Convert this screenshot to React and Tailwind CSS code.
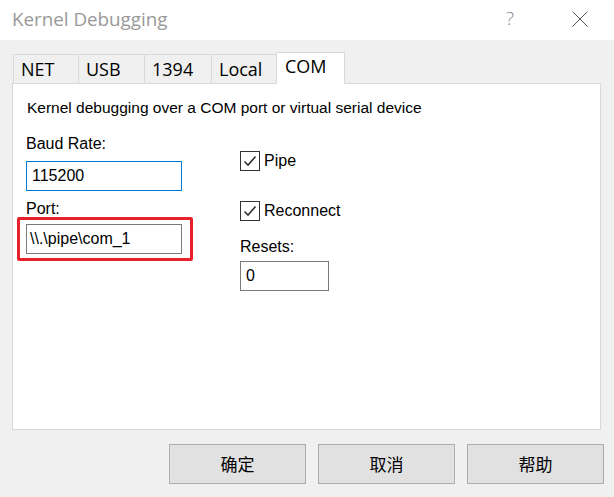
const seg = { fontFamily: '"Open Sans", "Noto Sans", sans-serif' };
const arial = { fontFamily: '"Liberation Sans", Arial, sans-serif' };
const cjk = { fontFamily: '"Noto Sans CJK SC", "Noto Sans", sans-serif' };

function Check({ label, className = "" }) {
  return (
    <label className={"flex items-center gap-[4px] " + className}>
      <span className="w-[20px] h-[20px] border border-[#333333] bg-white flex items-center justify-center">
        <svg width="14" height="12" viewBox="0 0 14 12">
          <path d="M1.5 6.5 L5 10 L12.5 1.5" fill="none" stroke="#333" strokeWidth="1.6" />
        </svg>
      </span>
      <span className="text-[16px] leading-[18px] text-black">{label}</span>
    </label>
  );
}

function Tab({ label, active }) {
  if (active) {
    return (
      <div className="relative z-10 -ml-px -mb-px w-[69px] h-[32px] bg-white border border-b-0 border-[#d9d9d9] pl-[8px] text-[18px] leading-[26px] text-black">
        {label}
      </div>
    );
  }
  return (
    <div className="-ml-px first:ml-0 h-[29px] bg-[#f0f0f0] border border-b-0 border-[#d9d9d9] pl-[7px] text-[18px] leading-[29px] text-black" style={{ width: label.w }}>
      {label.t}
    </div>
  );
}

export default function App() {
  const tabs = [
    { t: "NET", w: 66 },
    { t: "USB", w: 67 },
    { t: "1394", w: 68 },
    { t: "Local", w: 66 },
  ];
  return (
    <div className="w-[614px] h-[497px] bg-[#f0f0f0] flex flex-col overflow-hidden">
      <div className="h-[40px] bg-white flex items-center shrink-0">
        <div className="pl-[12px] text-[18.8px] text-[#999999] leading-[24px] -mt-[3px]" style={seg}>
          Kernel Debugging
        </div>
        <div className="ml-auto mr-[58px] text-[19px] font-light text-[#8a8a8a] -mt-[4px]" style={seg}>?</div>
        <svg width="16" height="16" viewBox="0 0 16 16" className="mr-[26px] -mt-[3px]">
          <path d="M0.5 0.5 L15.5 15.5 M15.5 0.5 L0.5 15.5" stroke="#555" strokeWidth="1" />
        </svg>
      </div>

      <div className="pl-[12px] pr-[13px] pt-[12px]">
        <div className="flex items-end h-[31px] pl-[1px]" style={seg}>
          {tabs.map((t) => (
            <Tab key={t.t} label={t} />
          ))}
          <Tab label="COM" active />
        </div>

        <div className="h-[347px] bg-white border border-[#d9d9d9] pl-[14px] pt-[15px]" style={arial}>
          <div className="text-[15.5px] leading-[18px] text-black">
            Kernel debugging over a COM port or virtual serial device
          </div>

          <div className="flex">
            <div className="w-[214px] pt-[18px] -ml-px">
              <div className="text-[16px] leading-[18px] text-black">Baud Rate:</div>
              <div className="mt-[8px] w-[156px] h-[30px] border border-[#0078d7] bg-white pl-[5px] text-[16px] leading-[28px] text-black">
                115200
              </div>
              <div className="mt-[9px] text-[16px] leading-[18px] text-black">Port:</div>
              <div className="relative mt-[6px] w-[156px] h-[30px] border border-[#7a7a7a] bg-white pl-[3px] text-[16px] leading-[28px] text-black">
                \\.\pipe\com_1
                <div className="absolute -left-[10px] -top-[8px] w-[176px] h-[44px] border-[3px] border-[#e8202a] rounded-[2px]" />
              </div>
            </div>

            <div className="pt-[34px]">
              <Check label="Pipe" />
              <Check label="Reconnect" className="mt-[30px]" />
              <div className="mt-[17px] text-[16px] leading-[18px] text-black">Resets:</div>
              <div className="mt-[5px] w-[89px] h-[30px] border border-[#7a7a7a] bg-white pl-[5px] text-[16px] leading-[28px] text-black">
                0
              </div>
            </div>
          </div>
        </div>
      </div>

      <div className="flex justify-end gap-[12px] pr-[10px] mt-[14px]" style={cjk}>
        {["确定", "取消", "帮助"].map((b) => (
          <button
            key={b}
            className="w-[137px] h-[40px] bg-[#e1e1e1] border border-[#adadad] text-[17px] text-black flex items-center justify-center"
          >
            {b}
          </button>
        ))}
      </div>
    </div>
  );
}
